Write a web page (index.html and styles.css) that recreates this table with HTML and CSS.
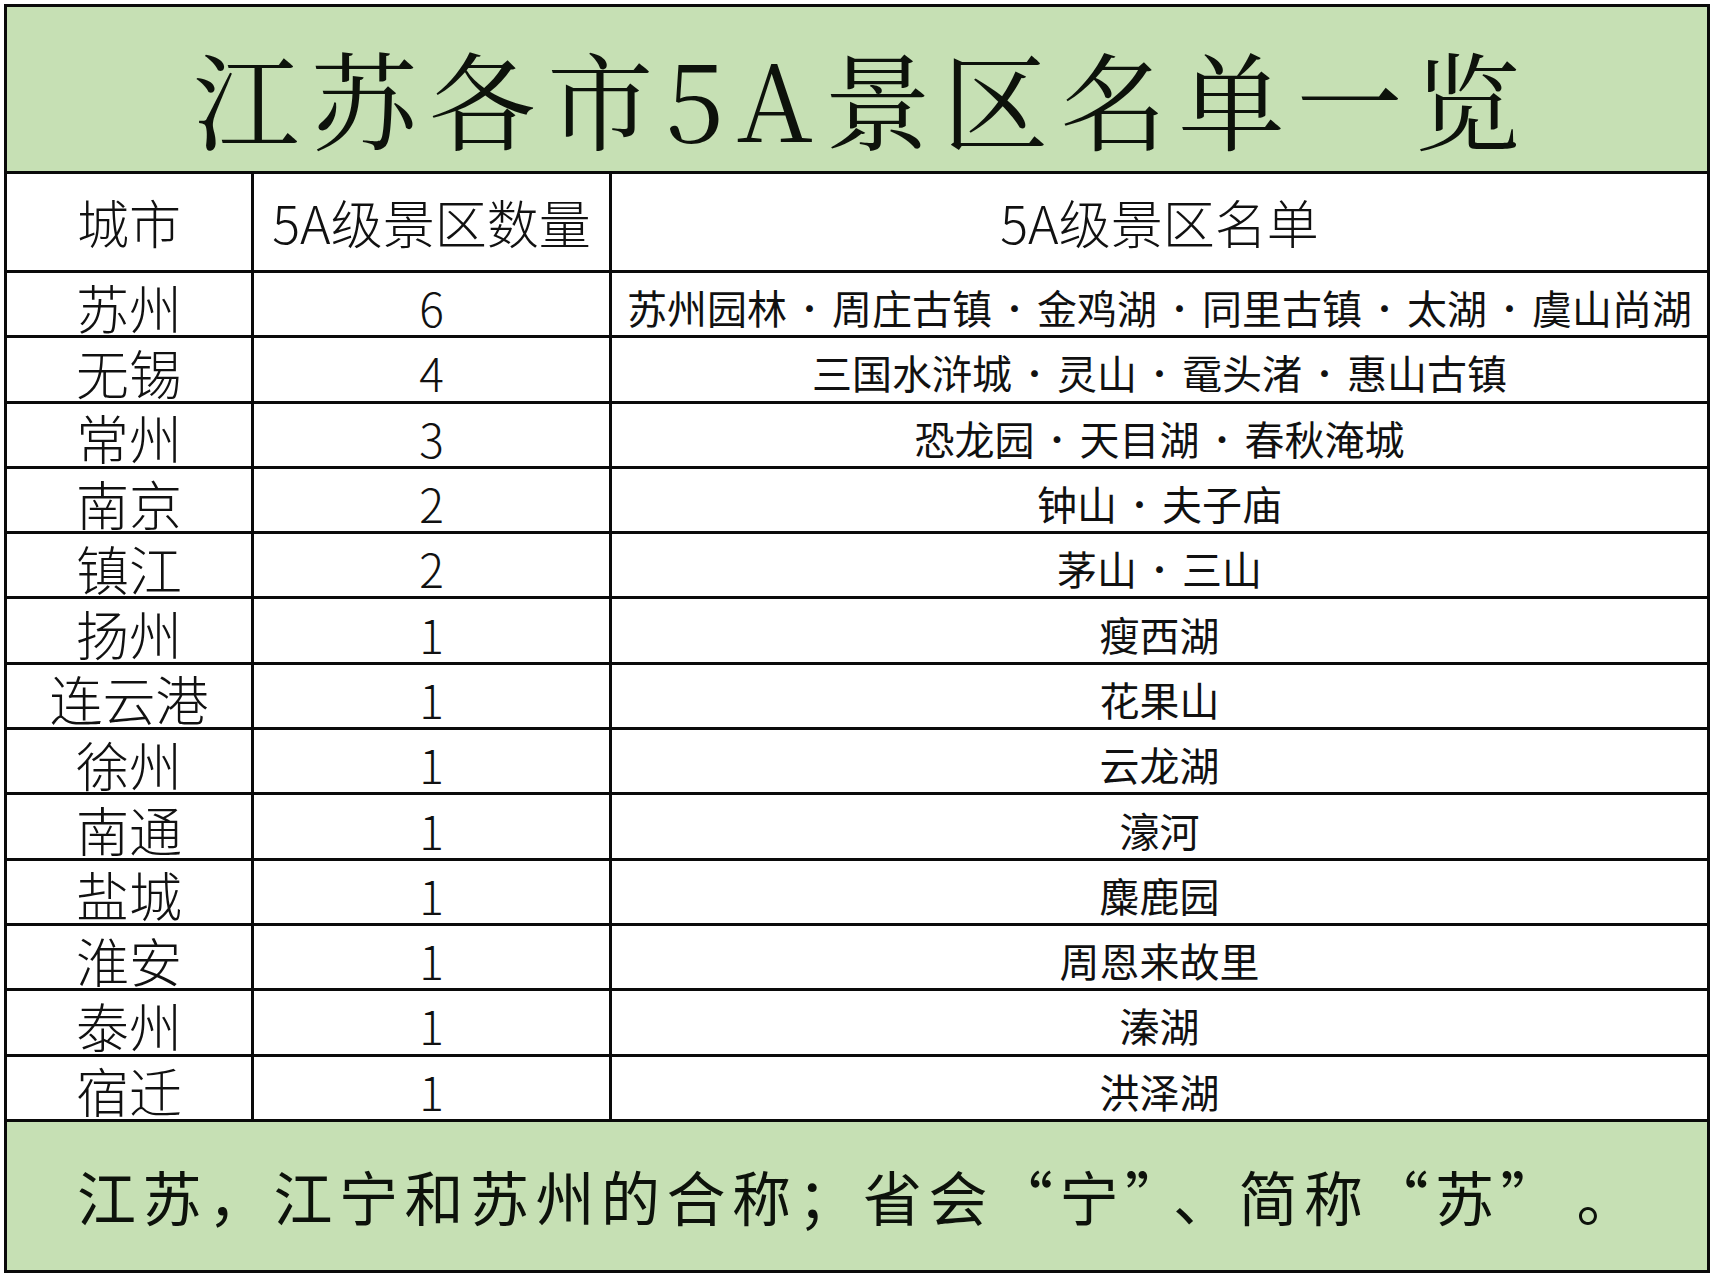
FILE: index.html
```html
<!DOCTYPE html>
<html lang="zh-CN">
<head>
<meta charset="utf-8">
<title>江苏各市5A景区名单一览</title>
<link rel="stylesheet" href="styles.css">
</head>
<body>
<div class="sheet">
  <div class="title"><h1>江苏各市5A景区名单一览</h1></div>
  <div class="grid">
    <div class="cell city head">城市</div>
    <div class="cell num head">5A级景区数量</div>
    <div class="cell list head">5A级景区名单</div>

    <div class="cell city">苏州</div>
    <div class="cell num">6</div>
    <div class="cell list">苏州园林<span class="dot">·</span>周庄古镇<span class="dot">·</span>金鸡湖<span class="dot">·</span>同里古镇<span class="dot">·</span>太湖<span class="dot">·</span>虞山尚湖</div>

    <div class="cell city">无锡</div>
    <div class="cell num">4</div>
    <div class="cell list">三国水浒城<span class="dot">·</span>灵山<span class="dot">·</span>鼋头渚<span class="dot">·</span>惠山古镇</div>

    <div class="cell city">常州</div>
    <div class="cell num">3</div>
    <div class="cell list">恐龙园<span class="dot">·</span>天目湖<span class="dot">·</span>春秋淹城</div>

    <div class="cell city">南京</div>
    <div class="cell num">2</div>
    <div class="cell list">钟山<span class="dot">·</span>夫子庙</div>

    <div class="cell city">镇江</div>
    <div class="cell num">2</div>
    <div class="cell list">茅山<span class="dot">·</span>三山</div>

    <div class="cell city">扬州</div>
    <div class="cell num">1</div>
    <div class="cell list">瘦西湖</div>

    <div class="cell city">连云港</div>
    <div class="cell num">1</div>
    <div class="cell list">花果山</div>

    <div class="cell city">徐州</div>
    <div class="cell num">1</div>
    <div class="cell list">云龙湖</div>

    <div class="cell city">南通</div>
    <div class="cell num">1</div>
    <div class="cell list">濠河</div>

    <div class="cell city">盐城</div>
    <div class="cell num">1</div>
    <div class="cell list">麋鹿园</div>

    <div class="cell city">淮安</div>
    <div class="cell num">1</div>
    <div class="cell list">周恩来故里</div>

    <div class="cell city">泰州</div>
    <div class="cell num">1</div>
    <div class="cell list">溱湖</div>

    <div class="cell city">宿迁</div>
    <div class="cell num">1</div>
    <div class="cell list">洪泽湖</div>
  </div>
  <div class="footer"><p>江苏，江宁和苏州的合称；省会“宁”<span class="p-mid">、</span>简称“苏”<span class="p-end">。</span></p></div>
</div>
</body>
</html>
```

FILE: styles.css
```css
html, body {
  margin: 0;
  padding: 0;
  background: #ffffff;
}

body {
  font-family: "Noto Sans CJK SC", "Noto Sans", sans-serif;
  color: #111111;
}

.sheet {
  box-sizing: border-box;
  width: 1706px;
  margin: 4px 0 0 4px;
  border: 3px solid #0a0a0a;
}

.title {
  box-sizing: border-box;
  height: 167px;
  background: #c6e0b4;
  border-bottom: 3px solid #0a0a0a;
  display: flex;
  align-items: center;
  justify-content: center;
  padding-top: 14px;
}

.title h1 {
  margin: 0 -12px 0 0;
  font-family: "Noto Serif CJK SC", "Noto Sans CJK SC", serif;
  font-weight: 400;
  font-size: 106px;
  line-height: 1;
  letter-spacing: 12px;
  color: #0d120b;
}

.grid {
  display: grid;
  grid-template-columns: 247px 358px 1fr;
  grid-template-rows: 99px repeat(13, 65.3px);
}

.cell {
  box-sizing: border-box;
  display: flex;
  align-items: center;
  justify-content: center;
  border-bottom: 3px solid #0a0a0a;
  line-height: 1;
  white-space: nowrap;
  padding-top: 6px;
}

.city, .num {
  border-right: 3px solid #0a0a0a;
}

.city {
  font-size: 53px;
  font-weight: 300;
}

.num {
  font-size: 46px;
  font-weight: 300;
}

.list {
  font-size: 40px;
  font-weight: 400;
}

.grid .head {
  font-size: 52px;
  font-weight: 300;
  padding-top: 0;
}

.dot {
  display: inline-block;
  width: 45px;
  text-align: center;
  font-weight: 300;
  font-size: 36px;
}

.footer {
  box-sizing: border-box;
  height: 148px;
  background: #c6e0b4;
  display: flex;
  align-items: center;
  padding-left: 70px;
}

.footer p {
  margin: 0;
  font-size: 59px;
  font-weight: 400;
  letter-spacing: 6.5px;
  line-height: 1;
  color: #0d120b;
}

.p-mid {
  margin-left: 12px;
}

.p-end {
  margin-left: 40px;
}
```
